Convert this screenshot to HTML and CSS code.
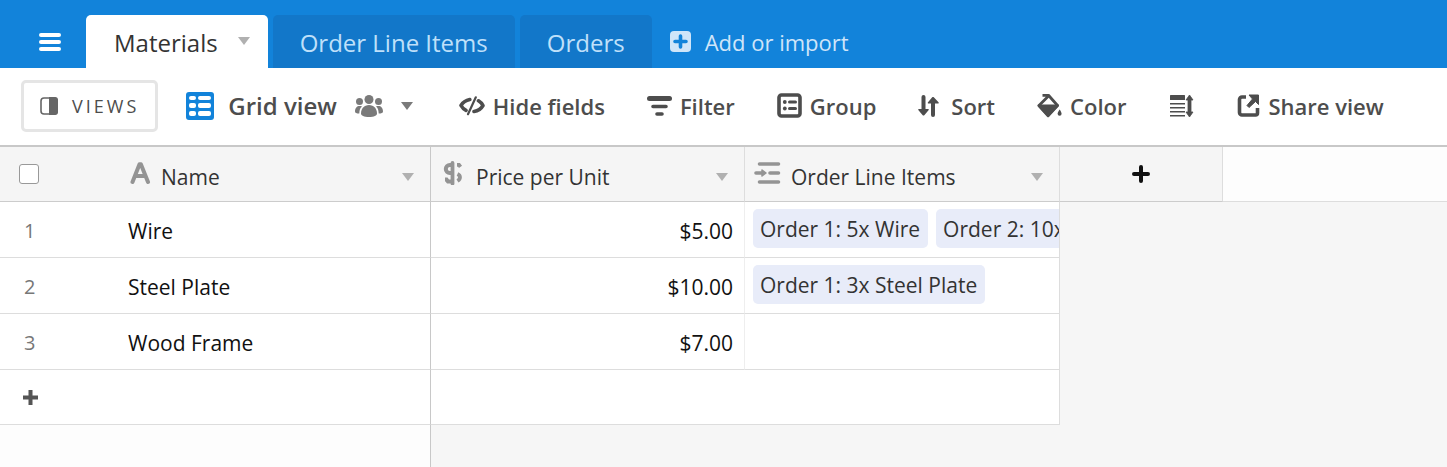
FILE: index.html
```html
<!DOCTYPE html>
<html lang="en">
<head>
  <meta charset="UTF-8">
  <meta name="viewport" content="width=device-width, initial-scale=1.0">
  <title>Materials</title>
  <link rel="stylesheet" href="styles.css">
</head>
<body>
  <!-- Table tabs -->
  <header class="topbar">
    <button class="menu-button" aria-label="Menu">
      <svg width="22" height="18" viewBox="0 0 22 18" stroke="#fff" stroke-width="4" stroke-linecap="round"><path d="M2 2h18M2 9h18M2 16h18"/></svg>
    </button>
    <nav class="tabs">
      <a class="tab active" href="#">Materials <span class="caret"></span></a>
      <a class="tab" href="#">Order Line Items</a>
      <a class="tab" href="#">Orders</a>
    </nav>
    <button class="add-import">
      <svg width="21" height="21" viewBox="0 0 21 21"><rect width="21" height="21" rx="4" fill="#cfe5f9"/><path d="M10.500 5v11M5 10.500h11" stroke="#1283da" stroke-width="3.600" stroke-linecap="round"/></svg>
      Add or import
    </button>
  </header>

  <!-- View toolbar -->
  <div class="toolbar">
    <button class="views-button">
      <svg width="18" height="18" viewBox="0 0 18 18"><rect x="1" y="1" width="16" height="16" rx="3" fill="#fff" stroke="#666" stroke-width="1.600"/><path d="M9 0h6a3 3 0 0 1 3 3v12a3 3 0 0 1-3 3H9z" fill="#666"/></svg>
      VIEWS
    </button>
    <button class="view-name">
      <svg width="28" height="28" viewBox="0 0 28 28"><rect width="28" height="28" rx="3" fill="#1283da"/><g fill="#fff"><rect x="3" y="4" width="7" height="4" rx="2"/><rect x="12" y="4" width="13" height="4" rx="2"/><rect x="3" y="11" width="7" height="5" rx="2"/><rect x="12" y="11" width="13" height="5" rx="2"/><rect x="3" y="19" width="7" height="5" rx="2"/><rect x="12" y="19" width="13" height="5" rx="2"/></g></svg>
      Grid view
      <svg class="people" width="28" height="22" viewBox="0 0 28 22" fill="#7a7a7a"><circle cx="14" cy="4.500" r="4.500"/><circle cx="4.500" cy="6.500" r="3.500"/><circle cx="23.500" cy="6.500" r="3.500"/><path d="M14 10c5 0 8 4 8 8.500 0 2-3 3.500-8 3.500s-8-1.500-8-3.500C6 14 9 10 14 10z"/><path d="M7 11.500C5 13 4.500 15 4.300 18.500 1.500 18.500 0 18 0 16.500c0-3.500 2-5.500 4.500-5.500 1 0 1.800 0 2.500.5zM21 11.500c2 1.500 2.500 3.500 2.700 7 2.800 0 4.300-.5 4.300-2 0-3.500-2-5.500-4.500-5.500-1 0-1.800 0-2.500.5z"/></svg>
      <span class="caret"></span>
    </button>
    <button class="tool">
      <svg width="26" height="20" viewBox="0 0 26 20" fill="none" stroke="#4d4d4d" stroke-linecap="round" stroke-linejoin="round"><path d="M10.800 3.600C6.500 4.500 3.500 7 2 9.500c1.200 2.200 2.800 3.800 5 4.900" stroke-width="3.600"/><path d="M19.500 4.800c2 1.200 3.400 2.700 4.500 4.700-2 3.500-5 5.400-9 6" stroke-width="3.600"/><path d="M16.800 1.300L9 18.200" stroke-width="2.200"/></svg>
      Hide fields
    </button>
    <button class="tool">
      <svg width="25" height="20" viewBox="0 0 25 20" stroke="#4d4d4d" stroke-linecap="round"><path d="M2.500 2.500h20" stroke-width="5"/><path d="M6 10.500h13M10 18h5" stroke-width="3.600"/></svg>
      Filter
    </button>
    <button class="tool">
      <svg width="25" height="25" viewBox="0 0 25 25"><rect x="2" y="2" width="21" height="21" rx="2.500" fill="none" stroke="#4d4d4d" stroke-width="3.600"/><g fill="#4d4d4d"><circle cx="7.800" cy="9" r="1.900"/><circle cx="7.800" cy="15.500" r="1.900"/><rect x="11" y="7.500" width="9" height="3" rx="1.500"/><rect x="11" y="14" width="9" height="3" rx="1.500"/></g></svg>
      Group
    </button>
    <button class="tool">
      <svg width="25" height="22" viewBox="0 0 25 22" fill="#4d4d4d"><path d="M3.500 2a2 2 0 0 1 4 0v12H10c.8 0 1 .7.500 1.300L6.300 20.200c-.5.500-1.100.5-1.600 0L.5 15.300c-.5-.6-.3-1.300.5-1.300h2.500z"/><path d="M13 20a2 2 0 0 0 4 0V8.500h3c.8 0 1-.7.500-1.300L15.800 2.300c-.5-.5-1.100-.5-1.600 0L10 7.200c-.5.600-.3 1.300.500 1.300H13z"/></svg>
      Sort
    </button>
    <button class="tool">
      <svg width="25" height="25" viewBox="0 0 25 25"><path d="M5.500 2.300h6l9 10.200L11 22 2 12.500l9.500-9.500" fill="none" stroke="#4d4d4d" stroke-width="2.800" stroke-linejoin="round"/><path d="M1 11.500h20.500c.6.500.6 1.500 0 2L12.200 23.800c-.7.700-1.500.7-2.200 0L.8 13.500c-.4-.5-.3-1.500.2-2z" fill="#4d4d4d"/><path d="M22.700 16.500c1.200 2 1.900 3.200 1.900 4.300a2 2 0 0 1-4 0c0-1.100.8-2.300 2.100-4.300z" fill="#4d4d4d"/></svg>
      Color
    </button>
    <button class="tool" aria-label="Row height">
      <svg width="26" height="22" viewBox="0 0 26 22" fill="#4d4d4d"><rect x="1" width="15" height="5" rx=".5"/><path d="M1 8h15v1.500H1zM1 12h15v1.500H1zM1 16h15v1.500H1zM1 20h15v1.500H1z"/><path d="M20.500 0l3.500 5h-2v12h2l-3.500 5-3.500-5h2V5h-2z" stroke="#4d4d4d" stroke-width=".8"/></svg>
    </button>
    <button class="tool">
      <svg width="24" height="24" viewBox="0 0 24 24"><path d="M9 3H5a2.500 2.500 0 0 0-2.500 2.500v13A2.500 2.500 0 0 0 5 21h13.500a2 2 0 0 0 2-2v-5" fill="none" stroke="#4d4d4d" stroke-width="3.600"/><path d="M12 1h9.500v9.500l-3-3-6.500 6-2-2 5.500-6.500z" fill="#4d4d4d" stroke="#4d4d4d" stroke-width="1" stroke-linejoin="round"/></svg>
      Share view
    </button>
  </div>

  <!-- Records -->
  <table class="grid">
    <colgroup>
      <col class="col-num">
      <col class="col-name">
      <col class="col-price">
      <col class="col-items">
      <col class="col-add">
      <col>
    </colgroup>
    <thead>
      <tr>
        <th class="num"><input type="checkbox" aria-label="Select all records"></th>
        <th class="name">
          <div class="field">
            <svg width="21" height="22" viewBox="0 0 21 22" fill="none" stroke="#949494" stroke-width="4" stroke-linecap="round" stroke-linejoin="round"><path d="M2.500 20L9.500 2.200h1.400L18 20M5.500 14h9"/></svg>
            <span>Name</span>
            <span class="caret"></span>
          </div>
        </th>
        <th>
          <div class="field">
            <svg width="26" height="24" viewBox="0 0 26 24" fill="none" stroke="#949494"><path d="M12.500 4H9.800a4 4 0 0 0 0 8h2.700M5 18.500h1.500l1.500 2h4.500" stroke-width="4"/><path d="M12.500 2v20.500" stroke-width="3.800" stroke-linecap="round"/><path d="M17 3.800h2l1.500 2M17.500 13c3.300 1.500 3.300 5 0 7" stroke-width="3.800"/></svg>
            <span>Price per Unit</span>
            <span class="caret"></span>
          </div>
        </th>
        <th>
          <div class="field">
            <svg width="27" height="22" viewBox="0 0 27 22" stroke="#949494" stroke-width="3.600" stroke-linecap="round"><path d="M5.500 2h19M16 11h8.500M5.500 20h19M2 11h6"/><path d="M8 8l4 3-4 3z" stroke-width="1.500" fill="#949494" stroke-linejoin="round"/></svg>
            <span>Order Line Items</span>
            <span class="caret"></span>
          </div>
        </th>
        <th class="add-field">
          <button aria-label="Add field"><svg width="18" height="18" viewBox="0 0 18 18" stroke="#111" stroke-width="4" stroke-linecap="round"><path d="M9 2v14M2 9h14"/></svg></button>
        </th>
        <th class="rest"></th>
      </tr>
    </thead>
    <tbody>
      <tr>
        <td class="num">1</td>
        <td class="name">Wire</td>
        <td class="price">$5.00</td>
        <td class="items"><div class="chips"><span class="chip">Order 1: 5x Wire</span><span class="chip">Order 2: 10x Wire</span></div></td>
        <td class="outside" colspan="2"></td>
      </tr>
      <tr>
        <td class="num">2</td>
        <td class="name">Steel Plate</td>
        <td class="price">$10.00</td>
        <td class="items"><div class="chips"><span class="chip">Order 1: 3x Steel Plate</span></div></td>
        <td class="outside" colspan="2"></td>
      </tr>
      <tr>
        <td class="num">3</td>
        <td class="name">Wood Frame</td>
        <td class="price">$7.00</td>
        <td class="items"></td>
        <td class="outside" colspan="2"></td>
      </tr>
      <tr class="add-row">
        <td class="num"><button aria-label="Add record"><svg width="15" height="15" viewBox="0 0 15 15" stroke="#555" stroke-width="4"><path d="M7.500 0v15M0 7.500h15"/></svg></button></td>
        <td class="name"></td>
        <td class="blank" colspan="2"></td>
        <td class="outside" colspan="2"></td>
      </tr>
      <tr class="filler">
        <td class="left" colspan="2"></td>
        <td class="outside" colspan="4"></td>
      </tr>
    </tbody>
  </table>
</body>
</html>
```
FILE: styles.css
```css
* {
  box-sizing: border-box;
}

body {
  margin: 0;
  min-height: 100vh;
  display: flex;
  flex-direction: column;
  font-family: "Open Sans", "Noto Sans", sans-serif;
  font-size: 21px;
  line-height: 28px;
  color: #333;
  background-color: #f6f6f6;
}

button {
  display: flex;
  align-items: center;
  padding: 0;
  border: none;
  background: none;
  font: inherit;
  color: inherit;
  white-space: nowrap;
  cursor: pointer;
}

svg {
  display: block;
  flex-shrink: 0;
}

.caret {
  flex-shrink: 0;
  border: 6px solid transparent;
  border-top: 8px solid #b0b0b0;
  border-bottom: none;
}

/* Tabs */
.topbar {
  display: flex;
  height: 68px;
  padding: 15px 0 0 39px;
  background-color: #1283da;
}

.menu-button {
  margin-right: 25px;
}

.tabs {
  display: flex;
  gap: 5px;
}

.tab {
  display: flex;
  align-items: center;
  gap: 20px;
  padding: 3px 27px 0;
  border-radius: 5px 5px 0 0;
  background-color: #1277c9;
  font-size: 24px;
  color: #bfe0fa;
  text-decoration: none;
  white-space: nowrap;
}

.tab.active {
  padding-right: 18px;
  padding-left: 28px;
  background-color: #fff;
  color: #333;
}

.tab .caret {
  margin-bottom: 4px;
}

.add-import {
  gap: 14px;
  margin-left: 18px;
  color: #cfe5f9;
  font-size: 22px;
}

/* Toolbar */
.toolbar {
  display: flex;
  align-items: center;
  gap: 42px;
  height: 79px;
  padding: 0 21px 2px;
  border-bottom: 2px solid #c8c8c8;
  background-color: #fff;
  color: #4d4d4d;
  font-size: 22px;
  font-weight: 600;
}

.views-button {
  gap: 14px;
  height: 52px;
  margin-right: -14px;
  padding: 0 16px;
  border: 3px solid #e5e5e5;
  border-radius: 5px;
  font-size: 18px;
  font-weight: 400;
  letter-spacing: 3px;
}

.view-name {
  gap: 14px;
  margin-right: 4px;
  font-size: 24px;
}

.people {
  margin-left: 4px;
}

.view-name .caret {
  margin-left: 4px;
  border-top-color: #7a7a7a;
}

.tool {
  gap: 8px;
}

/* Grid */
.grid {
  flex: 1;
  width: 100%;
  table-layout: fixed;
  border-spacing: 0;
}

.col-num {
  width: 128px;
}

.col-name {
  width: 303px;
}

.col-price {
  width: 314px;
}

.col-items {
  width: 315px;
}

.col-add {
  width: 163px;
}

.grid th {
  height: 55px;
  padding: 0 16px 0 9px;
  border-right: 1px solid #ddd;
  border-bottom: 1px solid #ccc;
  background-color: #f5f5f5;
  font-weight: 400;
  text-align: left;
}

.grid td {
  height: 56px;
  padding: 2px 11px 0 0;
  border-bottom: 1px solid #ddd;
  background-color: #fff;
  color: #111;
}

.grid .num {
  padding: 2px 0 0 24px;
  border-right: none;
}

.grid td.num {
  color: #777;
  font-size: 20px;
}

.grid th.num {
  padding: 0 0 0 19px;
}

.grid th.name,
.grid td.name,
.grid td.left {
  border-right: 1px solid #c8c8c8;
}

.grid th.name {
  padding-left: 2px;
}

.num input {
  display: block;
  appearance: none;
  width: 20px;
  height: 20px;
  margin: 0;
  border: 1px solid #999;
  border-radius: 3px;
  background-color: #fff;
}

.field {
  display: flex;
  align-items: center;
  gap: 10px;
  padding-top: 6px;
}

.field svg {
  margin-bottom: 8px;
}

.field .caret {
  margin-left: auto;
}

.grid th.add-field {
  padding: 0;
}

.add-field button {
  margin: 0 auto;
}

.grid td.price {
  border-right: 1px solid #eee;
  text-align: right;
}

.grid td.items {
  padding: 0 0 2px 8px;
  border-right: 1px solid #ddd;
}

.chips {
  display: flex;
  gap: 8px;
  overflow: hidden;
}

.chip {
  flex-shrink: 0;
  padding: 2px 8px 0 7px;
  border-radius: 5px;
  background-color: #e8ecf9;
  color: #333;
  line-height: 37px;
  white-space: nowrap;
}

.grid th.rest {
  border-right: none;
  border-bottom-color: #ddd;
  background-color: #fdfdfd;
}

.grid .add-row td {
  height: 55px;
}

.grid .add-row .num {
  padding: 0 0 0 23px;
}

.grid td.blank {
  border-right: 1px solid #ddd;
}

.grid .filler td {
  height: auto;
  border-bottom: none;
}

.grid td.outside {
  border-bottom: none;
  background-color: #f6f6f6;
}

.grid td.left {
  background-color: #fdfdfd;
}
```
